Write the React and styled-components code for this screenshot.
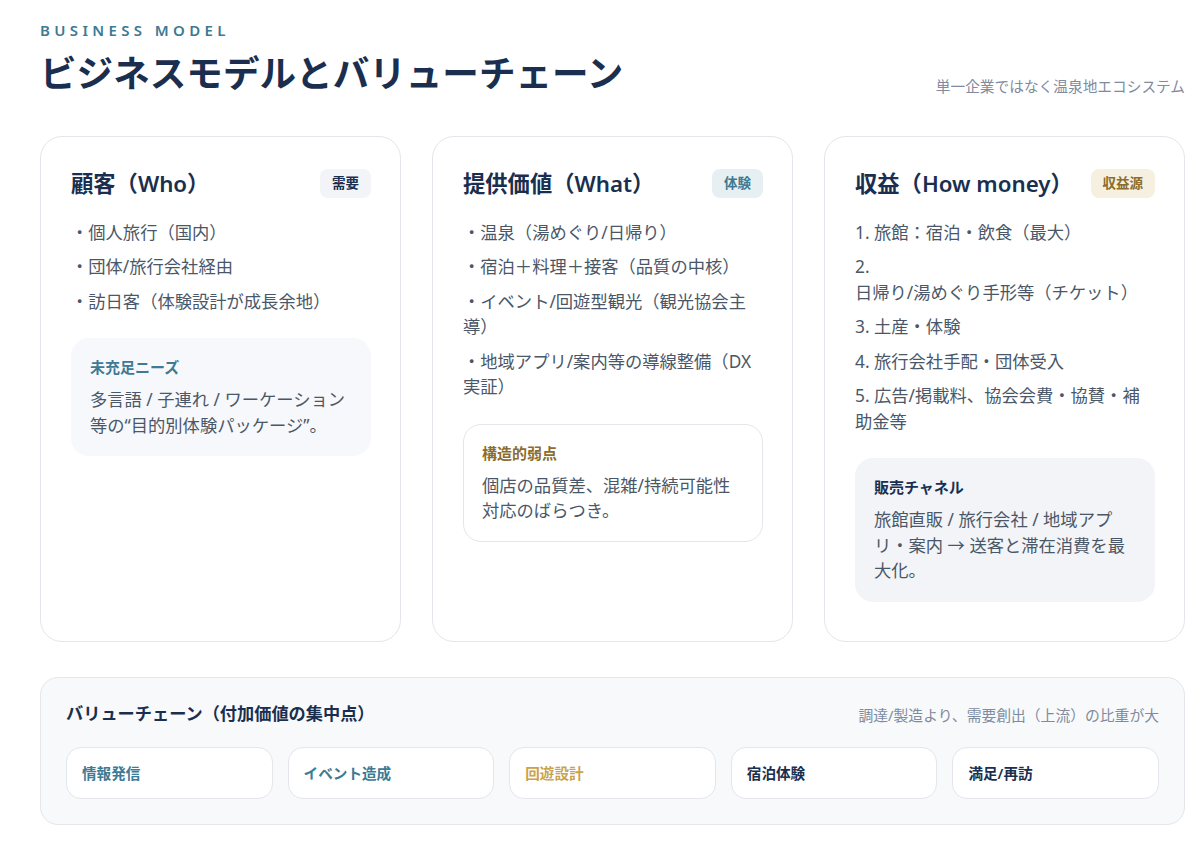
import React from "react";
import styled, { createGlobalStyle } from "styled-components";

const navy = "#1a2f4f";
const teal = "#3d7a94";
const gold = "#8a6d2f";

const GlobalStyle = createGlobalStyle`
  html, body {
    margin: 0;
    padding: 0;
    background: #fff;
  }
  body {
    font-family: "Noto Sans", "Noto Sans CJK JP", sans-serif;
    color: ${navy};
  }
`;

const Page = styled.div`
  width: 1200px;
  height: 844px;
  box-sizing: border-box;
  padding: 21px 15px 0 40px;
  overflow: hidden;
`;

const Header = styled.header`
  display: flex;
  justify-content: space-between;
  align-items: flex-start;
  height: 115px;
`;

const Eyebrow = styled.div`
  font-size: 15px;
  line-height: 19px;
  font-weight: 600;
  letter-spacing: 4.35px;
  color: ${teal};
`;

const Title = styled.h1`
  margin: 8px 0 0;
  font-size: 36.6px;
  line-height: 50px;
  font-weight: 600;
  color: ${navy};
`;

const Sub = styled.div`
  margin-top: 55px;
  font-size: 14.7px;
  line-height: 20px;
  color: #7f8b9f;
`;

const Cards = styled.div`
  display: grid;
  grid-template-columns: repeat(3, 361px);
  gap: 31px;
`;

const Card = styled.section`
  height: 506px;
  box-sizing: border-box;
  padding: 30px 29px 30px 30px;
  border: 1.5px solid #e3e6eb;
  border-radius: 22px;
  background: #fff;
`;

const CardHead = styled.div`
  display: flex;
  justify-content: space-between;
  align-items: center;
  height: 32px;
  margin-bottom: 20.5px;
`;

const CardTitle = styled.h2`
  margin: 0;
  padding-top: 2px;
  font-size: 22.3px;
  line-height: 32px;
  font-weight: 600;
  color: ${navy};
`;

const tagTones = {
  plain: { bg: "#f2f4f7", fg: navy },
  teal: { bg: "#e6f0f3", fg: teal },
  gold: { bg: "#f6f0e0", fg: gold },
};

const Tag = styled.span`
  padding: 0 12px;
  height: 29px;
  line-height: 29px;
  border-radius: 8px;
  font-size: 13.5px;
  font-weight: 600;
  background: ${(p) => tagTones[p.$tone].bg};
  color: ${(p) => tagTones[p.$tone].fg};
`;

const List = styled.ul`
  list-style: none;
  margin: 0;
  padding: 0;
  display: flex;
  flex-direction: column;
  gap: 9px;
`;

const Item = styled.li`
  font-size: 17.3px;
  line-height: 25.5px;
  color: #4a5768;
`;

const noteTones = {
  soft: "background: #f6f8fb; border: 1.5px solid #f6f8fb;",
  line: "background: #fff; border: 1.5px solid #e3e6eb;",
  grey: "background: #f2f4f7; border: 1.5px solid #f2f4f7;",
};

const Note = styled.div`
  margin-top: 24px;
  padding: 18px 18px 17px;
  border-radius: 18px;
  ${(p) => noteTones[p.$tone]}
`;

const NoteTitle = styled.div`
  font-size: 15px;
  line-height: 20px;
  font-weight: 600;
  margin-bottom: 10px;
  color: ${(p) => p.$color};
`;

const NoteText = styled.div`
  font-size: 17.3px;
  line-height: 25.5px;
  color: #4a5768;
`;

const Chain = styled.section`
  margin-top: 35px;
  height: 148px;
  box-sizing: border-box;
  padding: 24px 25px;
  background: #f7f9fb;
  border: 1.5px solid #e3e6eb;
  border-radius: 18px;
`;

const ChainHead = styled.div`
  display: flex;
  justify-content: space-between;
  align-items: center;
  height: 24px;
  margin-bottom: 21px;
`;

const ChainTitle = styled.h3`
  margin: 0;
  font-size: 17.2px;
  line-height: 24px;
  font-weight: 600;
  color: ${navy};
`;

const ChainSub = styled.div`
  font-size: 14.8px;
  color: #7f8b9f;
`;

const Steps = styled.div`
  display: grid;
  grid-template-columns: repeat(5, 1fr);
  gap: 15px;
`;

const Step = styled.div`
  height: 52px;
  box-sizing: border-box;
  display: flex;
  align-items: center;
  padding: 0 15px 2px;
  background: #fff;
  border: 1.5px solid #e3e6eb;
  border-radius: 15px;
  font-size: 14.6px;
  font-weight: 600;
  color: ${(p) => p.$color};
`;

const steps = [
  { label: "情報発信", color: teal },
  { label: "イベント造成", color: teal },
  { label: "回遊設計", color: "#c9a24d" },
  { label: "宿泊体験", color: navy },
  { label: "満足/再訪", color: navy },
];

export default function App() {
  return (
    <Page>
      <GlobalStyle />
      <Header>
        <div>
          <Eyebrow>BUSINESS MODEL</Eyebrow>
          <Title>ビジネスモデルとバリューチェーン</Title>
        </div>
        <Sub>単一企業ではなく温泉地エコシステム</Sub>
      </Header>

      <Cards>
        <Card>
          <CardHead>
            <CardTitle>顧客（Who）</CardTitle>
            <Tag $tone="plain">需要</Tag>
          </CardHead>
          <List>
            <Item>・個人旅行（国内）</Item>
            <Item>・団体/旅行会社経由</Item>
            <Item>・訪日客（体験設計が成長余地）</Item>
          </List>
          <Note $tone="soft">
            <NoteTitle $color={teal}>未充足ニーズ</NoteTitle>
            <NoteText>多言語 / 子連れ / ワーケーション等の“目的別体験パッケージ”。</NoteText>
          </Note>
        </Card>

        <Card>
          <CardHead>
            <CardTitle>提供価値（What）</CardTitle>
            <Tag $tone="teal">体験</Tag>
          </CardHead>
          <List>
            <Item>・温泉（湯めぐり/日帰り）</Item>
            <Item>・宿泊＋料理＋接客（品質の中核）</Item>
            <Item>・イベント/回遊型観光（観光協会主導）</Item>
            <Item>・地域アプリ/案内等の導線整備（DX実証）</Item>
          </List>
          <Note $tone="line">
            <NoteTitle $color={gold}>構造的弱点</NoteTitle>
            <NoteText>個店の品質差、混雑/持続可能性対応のばらつき。</NoteText>
          </Note>
        </Card>

        <Card>
          <CardHead>
            <CardTitle>収益（How money）</CardTitle>
            <Tag $tone="gold">収益源</Tag>
          </CardHead>
          <List>
            <Item>1. 旅館：宿泊・飲食（最大）</Item>
            <Item>2.<br />日帰り/湯めぐり手形等（チケット）</Item>
            <Item>3. 土産・体験</Item>
            <Item>4. 旅行会社手配・団体受入</Item>
            <Item>5. 広告/掲載料、協会会費・協賛・補助金等</Item>
          </List>
          <Note $tone="grey">
            <NoteTitle $color={navy}>販売チャネル</NoteTitle>
            <NoteText>旅館直販 / 旅行会社 / 地域アプリ・案内 → 送客と滞在消費を最大化。</NoteText>
          </Note>
        </Card>
      </Cards>

      <Chain>
        <ChainHead>
          <ChainTitle>バリューチェーン（付加価値の集中点）</ChainTitle>
          <ChainSub>調達/製造より、需要創出（上流）の比重が大</ChainSub>
        </ChainHead>
        <Steps>
          {steps.map((s) => (
            <Step key={s.label} $color={s.color}>{s.label}</Step>
          ))}
        </Steps>
      </Chain>
    </Page>
  );
}
